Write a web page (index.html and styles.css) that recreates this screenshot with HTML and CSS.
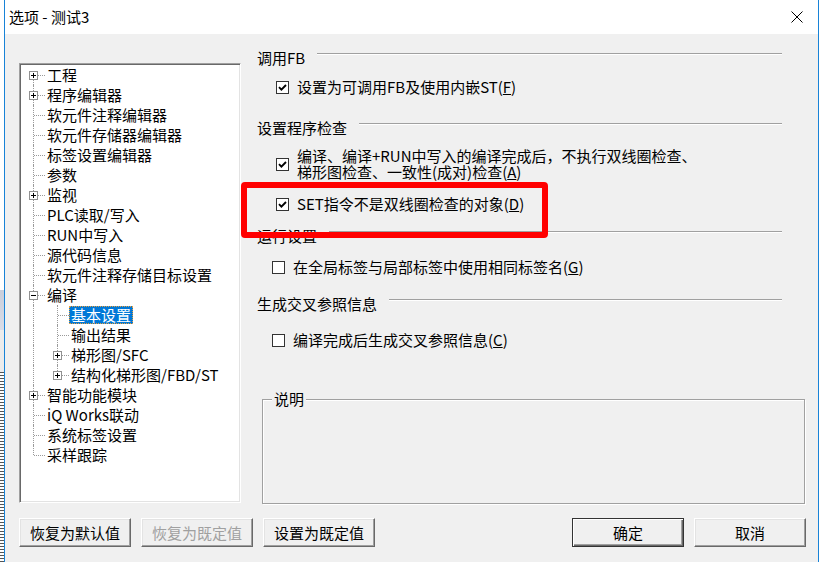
FILE: index.html
```html
<!DOCTYPE html>
<html lang="zh-CN">
<head>
<meta charset="utf-8">
<title>选项 - 测试3</title>
<link rel="stylesheet" href="styles.css">
</head>
<body>
<div class="screen">
  <div class="bgstrip"></div>
  <div class="window">
    <div class="titlebar">
      <span class="title">选项 - 测试3</span>
      <svg class="close" width="12" height="12" viewBox="0 0 12 12"><path d="M0.5 0.5L11.5 11.5M11.5 0.5L0.5 11.5" stroke="#000" stroke-width="1" fill="none"/></svg>
    </div>
    <div class="client">
      <div class="main">
        <div class="tree">
          <div class="row"><span class="g v first t"><svg width="9" height="9" viewBox="0 0 9 9"><rect x="0.5" y="0.5" width="8" height="8" fill="#fff" stroke="#919191"/><path d="M2 4.5h5M4.5 2v5" stroke="#000"/></svg></span><span class="lbl">工程</span></div>
          <div class="row"><span class="g v t"><svg width="9" height="9" viewBox="0 0 9 9"><rect x="0.5" y="0.5" width="8" height="8" fill="#fff" stroke="#919191"/><path d="M2 4.5h5M4.5 2v5" stroke="#000"/></svg></span><span class="lbl">程序编辑器</span></div>
          <div class="row"><span class="g v t"></span><span class="lbl">软元件注释编辑器</span></div>
          <div class="row"><span class="g v t"></span><span class="lbl">软元件存储器编辑器</span></div>
          <div class="row"><span class="g v t"></span><span class="lbl">标签设置编辑器</span></div>
          <div class="row"><span class="g v t"></span><span class="lbl">参数</span></div>
          <div class="row"><span class="g v t"><svg width="9" height="9" viewBox="0 0 9 9"><rect x="0.5" y="0.5" width="8" height="8" fill="#fff" stroke="#919191"/><path d="M2 4.5h5M4.5 2v5" stroke="#000"/></svg></span><span class="lbl">监视</span></div>
          <div class="row"><span class="g v t"></span><span class="lbl">PLC读取/写入</span></div>
          <div class="row"><span class="g v t"></span><span class="lbl">RUN中写入</span></div>
          <div class="row"><span class="g v t"></span><span class="lbl">源代码信息</span></div>
          <div class="row"><span class="g v t"></span><span class="lbl">软元件注释存储目标设置</span></div>
          <div class="row"><span class="g v t"><svg width="9" height="9" viewBox="0 0 9 9"><rect x="0.5" y="0.5" width="8" height="8" fill="#fff" stroke="#919191"/><path d="M2 4.5h5" stroke="#000"/></svg></span><span class="lbl">编译</span></div>
          <div class="row"><span class="g v"></span><span class="g v t"></span><span class="lbl sel">基本设置</span></div>
          <div class="row"><span class="g v"></span><span class="g v t"></span><span class="lbl">输出结果</span></div>
          <div class="row"><span class="g v"></span><span class="g v t"><svg width="9" height="9" viewBox="0 0 9 9"><rect x="0.5" y="0.5" width="8" height="8" fill="#fff" stroke="#919191"/><path d="M2 4.5h5M4.5 2v5" stroke="#000"/></svg></span><span class="lbl">梯形图/SFC</span></div>
          <div class="row"><span class="g v"></span><span class="g v last t"><svg width="9" height="9" viewBox="0 0 9 9"><rect x="0.5" y="0.5" width="8" height="8" fill="#fff" stroke="#919191"/><path d="M2 4.5h5M4.5 2v5" stroke="#000"/></svg></span><span class="lbl">结构化梯形图/FBD/ST</span></div>
          <div class="row"><span class="g v t"><svg width="9" height="9" viewBox="0 0 9 9"><rect x="0.5" y="0.5" width="8" height="8" fill="#fff" stroke="#919191"/><path d="M2 4.5h5M4.5 2v5" stroke="#000"/></svg></span><span class="lbl">智能功能模块</span></div>
          <div class="row"><span class="g v t"></span><span class="lbl">iQ Works联动</span></div>
          <div class="row"><span class="g v t"></span><span class="lbl">系统标签设置</span></div>
          <div class="row"><span class="g v last t"></span><span class="lbl">采样跟踪</span></div>
        </div>

        <div class="panel">
          <div class="hd"><span>调用FB</span><span class="ln"></span></div>
          <div class="cb m10"><span class="box"><svg width="11" height="11" viewBox="0 0 11 11"><path d="M2 5.2L4.4 7.6L9 3" stroke="#000" stroke-width="1.9" fill="none"/></svg></span><span>设置为可调用FB及使用内嵌ST(<u>F</u>)</span></div>

          <div class="hd m20"><span>设置程序检查</span><span class="ln"></span></div>
          <div class="cb m11 multi"><span class="box"><svg width="11" height="11" viewBox="0 0 11 11"><path d="M2 5.2L4.4 7.6L9 3" stroke="#000" stroke-width="1.9" fill="none"/></svg></span><span class="lines"><span class="l1">编译、编译+RUN中写入的编译完成后，不执行双线圈检查、</span><span class="l1">梯形图检查、一致性(成对)检查(<u>A</u>)</span></span></div>
          <div class="cb m14"><span class="box"><svg width="11" height="11" viewBox="0 0 11 11"><path d="M2 5.2L4.4 7.6L9 3" stroke="#000" stroke-width="1.9" fill="none"/></svg></span><span>SET指令不是双线圈检查的对象(<u>D</u>)</span></div>

          <div class="hd m11"><span>运行设置</span><span class="ln"></span></div>
          <div class="cb in2 m12"><span class="box"></span><span>在全局标签与局部标签中使用相同标签名(<u>G</u>)</span></div>

          <div class="hd m16"><span>生成交叉参照信息</span><span class="ln"></span></div>
          <div class="cb in2 m17"><span class="box"></span><span>编译完成后生成交叉参照信息(<u>C</u>)</span></div>

          <div class="group">
            <div class="glabel">说明</div>
          </div>
        </div>
      </div>

      <div class="btns">
        <div class="btn">恢复为默认值</div>
        <div class="btn dis">恢复为既定值</div>
        <div class="btn">设置为既定值</div>
        <div class="spacer"></div>
        <div class="btn def">确定</div>
        <div class="btn">取消</div>
      </div>
    </div>
  </div>
  <div class="redmark"></div>
</div>
</body>
</html>
```

FILE: styles.css
```css
* { box-sizing: border-box; margin: 0; padding: 0; }
html, body { width: 820px; height: 562px; overflow: hidden; }
body {
  font-family: "Noto Sans CJK SC", "Microsoft YaHei", sans-serif;
  font-size: 15px;
  color: #000;
  background: #fff;
}
.screen { position: relative; width: 820px; height: 562px; display: flex; }

.bgstrip {
  width: 4px; flex: none;
  background:
    linear-gradient(to bottom, #fff 0, #fff 290px, #c9cedb 290px, #d9dde8 330px, #ececec 330px, #ececec 372px, transparent 372px),
    repeating-linear-gradient(to bottom, #555 0, #555 1px, #fff 1px, #fff 3px);
}

.window {
  width: 815px; flex: none;
  border-left: 1px solid #1883d7;
  border-right: 1px solid #1883d7;
  background: #f0f0f0;
  display: flex; flex-direction: column;
}
.titlebar {
  height: 34px; flex: none; background: #fff;
  display: flex; align-items: center; justify-content: space-between;
  padding: 0 15px 0 4px;
}
.title { line-height: 20px; }
.close { display: block; }

.client { flex: 1; display: flex; flex-direction: column; }
.main { display: flex; align-items: flex-start; padding: 13px 0 0 14px; }

/* tree */
.tree {
  width: 222px; height: 440px; flex: none; margin-top: 16px;
  background: #fff;
  border: 1px solid; border-color: #a0a0a0 #fff #fff #a0a0a0;
  box-shadow: inset 1px 1px #696969, inset -1px -1px #e3e3e3;
  padding: 1px 1px;
  overflow: hidden;
}
.row { display: flex; align-items: center; height: 20px; }
.g { position: relative; width: 24px; height: 20px; flex: none; }
.g.v::before {
  content: ""; position: absolute; left: 12px; top: 0; bottom: 0;
  border-left: 1px dotted #9a9a9a;
}
.g.first::before { top: 10px; }
.g.last::before { bottom: 10px; }
.g.t::after {
  content: ""; position: absolute; left: 13px; right: 0; top: 10px;
  border-top: 1px dotted #9a9a9a;
}
.g svg { position: absolute; left: 8px; top: 6px; z-index: 1; }
.lbl { padding: 0 2px; line-height: 18px; white-space: nowrap; }
.sel { background: #0078d7; color: #fff; outline: 1px dotted #e8a040; outline-offset: -1px; }

/* right panel */
.panel { width: 564px; flex: none; display: flex; flex-direction: column; }
.hd {
  display: flex; align-items: center; height: 20px;
  padding-left: 16px; margin-right: 23px; white-space: nowrap;
}
.hd .ln {
  flex: 1; margin-left: 12px; margin-bottom: 6px;
  border-top: 1px solid #a0a0a0; border-bottom: 1px solid #fff;
}
.cb {
  display: flex; align-items: center; gap: 8px;
  padding-left: 35px; line-height: 20px; white-space: nowrap;
}
.cb.in2 { padding-left: 31px; }
.lines { display: flex; flex-direction: column; }
.l1 { display: block; height: 16px; line-height: 16px; }
.cb u { text-decoration: underline; text-underline-offset: 1px; }
.box {
  width: 13px; height: 13px; flex: none; display: block;
  border: 1px solid #333; background: #fff;
}
.box svg { display: block; }

.m10 { margin-top: 10px; }
.m11 { margin-top: 11px; }
.m12 { margin-top: 12px; }
.m14 { margin-top: 14px; }
.m16 { margin-top: 16px; }
.m17 { margin-top: 17px; }
.m20 { margin-top: 20px; }

.group {
  margin: 49px 0 0 21px; width: 543px; height: 105px;
  border: 1px solid #a0a0a0;
  box-shadow: inset 1px 1px #fff, 1px 1px #fff;
}
.glabel {
  width: fit-content; margin: -11px 0 0 9px; padding: 0 2px;
  background: #f0f0f0; line-height: 20px;
}

/* buttons */
.btns { display: flex; gap: 10px; margin-top: 14px; padding: 0 12px 0 14px; }
.spacer { flex: 1; }
.btn {
  width: 112px; height: 29px; flex: none;
  display: flex; align-items: center; justify-content: center;
  background: #f0f0f0;
  border: 1px solid; border-color: #fff #696969 #696969 #fff;
  box-shadow: inset -1px -1px #a0a0a0, inset 1px 1px #e3e3e3;
}
.btn.dis { color: #a0a0a0; }
.btn.def {
  border: 1px solid #333;
  box-shadow: inset 1px 1px #fff, inset -1px -1px #696969, inset -2px -2px #a0a0a0;
}

/* annotation */
.redmark {
  position: absolute; left: 241px; top: 182px; width: 307px; height: 56px;
  border: 6px solid #ff0000; border-radius: 4px;
}
```
